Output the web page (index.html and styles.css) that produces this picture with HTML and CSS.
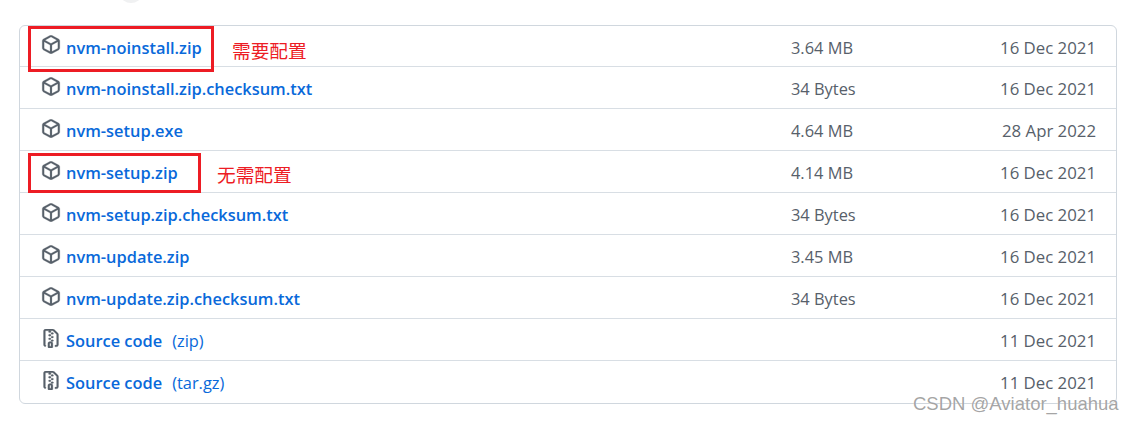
FILE: index.html
```html
<!DOCTYPE html>
<html lang="en">
<head>
  <meta charset="UTF-8" />
  <title>Assets</title>
  <link rel="stylesheet" href="styles.css">
</head>
<body>
  <svg width="0" height="0" class="defs">
    <symbol id="pkg" viewBox="0 0 16 16" preserveAspectRatio="none"><path d="m8.878.392 5.25 3.045c.54.314.872.89.872 1.514v6.098a1.75 1.75 0 0 1-.872 1.514l-5.25 3.045a1.75 1.75 0 0 1-1.756 0l-5.25-3.045A1.75 1.75 0 0 1 1 11.049V4.951c0-.624.332-1.201.872-1.514L7.122.392a1.75 1.75 0 0 1 1.756 0ZM7.875 1.69l-4.63 2.685L8 7.133l4.755-2.758-4.63-2.685a.248.248 0 0 0-.25 0ZM2.5 5.677v5.372c0 .09.047.171.125.216l4.625 2.683V8.432Zm6.25 8.271 4.625-2.683a.25.25 0 0 0 .125-.216V5.677L8.75 8.432Z"/></symbol>
    <symbol id="zip" viewBox="0 0 16 16" preserveAspectRatio="none"><path d="M3.5 1.75v11.5c0 .09.048.173.126.217a.75.75 0 0 1-.752 1.298A1.748 1.748 0 0 1 2 13.25V1.75C2 .784 2.784 0 3.75 0h5.586c.464 0 .909.185 1.237.513l2.914 2.914c.329.328.513.773.513 1.237v8.586A1.75 1.75 0 0 1 12.25 15h-.5a.75.75 0 0 1 0-1.5h.5a.25.25 0 0 0 .25-.25V4.664a.25.25 0 0 0-.073-.177L9.513 1.573a.25.25 0 0 0-.177-.073H7.25a.75.75 0 0 1 0 1.5h-.5a.75.75 0 0 1 0-1.5h-3a.25.25 0 0 0-.25.25Zm3.75 8.75h.5c.966 0 1.75.784 1.75 1.75v3a.75.75 0 0 1-.75.75h-2.5a.75.75 0 0 1-.75-.75v-3c0-.966.784-1.75 1.75-1.75ZM6 5.25a.75.75 0 0 1 .75-.75h.5a.75.75 0 0 1 0 1.5h-.5A.75.75 0 0 1 6 5.25Zm.75 2.25h.5a.75.75 0 0 1 0 1.5h-.5a.75.75 0 0 1 0-1.5ZM8 6.75A.75.75 0 0 1 8.75 6h.5a.75.75 0 0 1 0 1.5h-.5A.75.75 0 0 1 8 6.75ZM8.75 3h.5a.75.75 0 0 1 0 1.5h-.5a.75.75 0 0 1 0-1.5ZM8 9.75A.75.75 0 0 1 8.75 9h.5a.75.75 0 0 1 0 1.5h-.5A.75.75 0 0 1 8 9.75Zm-1 2.5v2.25h1v-2.25a.25.25 0 0 0-.25-.25h-.5a.25.25 0 0 0-.25.25Z"/></symbol>
  </svg>

  <div class="top-arc"></div>

  <div class="assets">
    <div class="row">
      <div class="name"><svg class="icon"><use href="#pkg"/></svg><a>nvm-noinstall.zip</a></div>
      <div class="size">3.64 MB</div><div class="date">16 Dec 2021</div>
    </div>
    <div class="row">
      <div class="name"><svg class="icon"><use href="#pkg"/></svg><a>nvm-noinstall.zip.checksum.txt</a></div>
      <div class="size">34 Bytes</div><div class="date">16 Dec 2021</div>
    </div>
    <div class="row">
      <div class="name"><svg class="icon"><use href="#pkg"/></svg><a>nvm-setup.exe</a></div>
      <div class="size">4.64 MB</div><div class="date">28 Apr 2022</div>
    </div>
    <div class="row">
      <div class="name"><svg class="icon"><use href="#pkg"/></svg><a>nvm-setup.zip</a></div>
      <div class="size">4.14 MB</div><div class="date">16 Dec 2021</div>
    </div>
    <div class="row">
      <div class="name"><svg class="icon"><use href="#pkg"/></svg><a>nvm-setup.zip.checksum.txt</a></div>
      <div class="size">34 Bytes</div><div class="date">16 Dec 2021</div>
    </div>
    <div class="row">
      <div class="name"><svg class="icon"><use href="#pkg"/></svg><a>nvm-update.zip</a></div>
      <div class="size">3.45 MB</div><div class="date">16 Dec 2021</div>
    </div>
    <div class="row">
      <div class="name"><svg class="icon"><use href="#pkg"/></svg><a>nvm-update.zip.checksum.txt</a></div>
      <div class="size">34 Bytes</div><div class="date">16 Dec 2021</div>
    </div>
    <div class="row">
      <div class="name"><svg class="icon"><use href="#zip"/></svg><a>Source code</a><span class="ext">(zip)</span></div>
      <div class="size"></div><div class="date">11 Dec 2021</div>
    </div>
    <div class="row">
      <div class="name"><svg class="icon"><use href="#zip"/></svg><a>Source code</a><span class="ext">(tar.gz)</span></div>
      <div class="size"></div><div class="date">11 Dec 2021</div>
    </div>
  </div>

  <!-- red annotations drawn over the list -->
  <div class="mark mark-one"></div>
  <div class="note note-one">需要配置</div>
  <div class="mark mark-two"></div>
  <div class="note note-two">无需配置</div>

  <div class="watermark">CSDN @Aviator_huahua</div>
</body>
</html>
```

FILE: styles.css
```css
body {
  margin: 0;
  padding: 25px 17px 0 19px;
  background-color: #fff;
  font-family: "Open Sans", "Noto Sans", sans-serif;
  font-size: 16.4px;
  color: #57606a;
  overflow: hidden;
}

.defs {
  position: absolute;
}

.top-arc {
  position: absolute;
  left: 121px;
  top: -12px;
  width: 20px;
  height: 15px;
  border-radius: 50%;
  background-color: #f0f1f2;
}

.assets {
  border: 1px solid #d0d7de;
  border-radius: 6px;
}

.row {
  display: flex;
  align-items: center;
  padding: 2px 20px 0 21px;
  height: 39px;
  border-top: 1px solid #d8dee4;
}

.row:first-child {
  height: 38px;
  border-top: none;
}

.row:last-child {
  padding-bottom: 1px;
}

.name {
  flex: 1;
  display: flex;
  align-items: center;
}

.icon {
  width: 20px;
  height: 19px;
  margin-right: 5px;
  margin-top: -5px;
  fill: #57606a;
  stroke: #57606a;
  stroke-width: 0.2;
}

.name a {
  color: #0969da;
  font-weight: 600;
  font-size: 16.4px;
}

.ext {
  margin-left: 10px;
  color: #0969da;
}

.size {
  width: 175px;
}

.date {
  width: 130px;
  font-size: 16.8px;
  text-align: right;
}

.mark {
  position: absolute;
  border: 3px solid #ed1c24;
}

.mark-one {
  left: 28px;
  top: 26px;
  width: 180px;
  height: 40px;
}

.mark-two {
  left: 28px;
  top: 153px;
  width: 167px;
  height: 34px;
}

.note {
  position: absolute;
  font-family: "Noto Sans CJK SC", sans-serif;
  font-size: 18.7px;
  line-height: 24px;
  color: #ed1c24;
}

.note-one {
  left: 232px;
  top: 38px;
}

.note-two {
  left: 217px;
  top: 162px;
}

.watermark {
  position: absolute;
  left: 913px;
  top: 392px;
  font-family: "Liberation Sans", Arial, sans-serif;
  font-size: 18.5px;
  line-height: 24px;
  color: rgba(125, 125, 125, 0.7);
  text-shadow: 0 0 1px #fff;
}
```
